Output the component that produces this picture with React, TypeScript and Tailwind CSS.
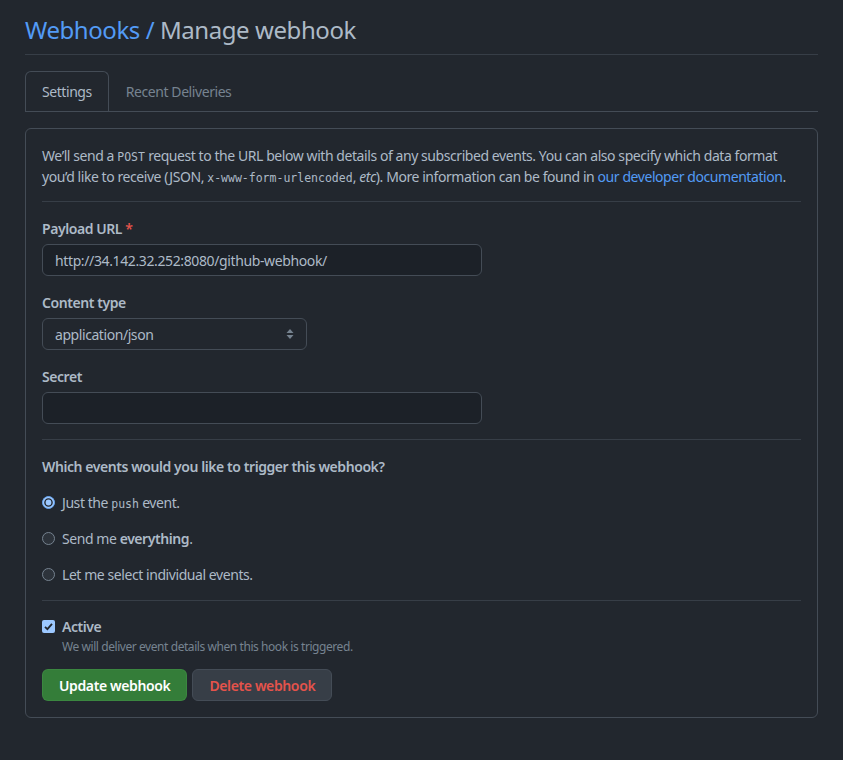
import React, { useState } from "react";

const Radio = ({ checked }: { checked: boolean }) =>
  checked ? (
    <svg width="13" height="13" viewBox="0 0 13 13" className="shrink-0">
      <circle cx="6.5" cy="6.5" r="6" fill="#9cc8ff" stroke="#6aa7f2" />
      <circle cx="6.5" cy="6.5" r="3.6" fill="#9cc8ff" stroke="#22272e" strokeWidth="1.4" />
    </svg>
  ) : (
    <svg width="13" height="13" viewBox="0 0 13 13" className="shrink-0">
      <circle cx="6.5" cy="6.5" r="6" fill="#2d333b" stroke="#768390" />
    </svg>
  );

const mono = { fontFamily: '"DejaVu Sans Mono", monospace', letterSpacing: "0", lineHeight: "0" };

const App = () => {
  const [event, setEvent] = useState<number>(0);
  const [url, setUrl] = useState<string>("http://34.142.32.252:8080/github-webhook/");

  return (
    <div
      className="min-h-screen w-full bg-[#22272e] text-[#adbac7] px-[25px] pt-[14px] pb-10 tracking-[-0.027em]"
      style={{ fontFamily: '"Segoe UI", "Noto Sans", "Liberation Sans", sans-serif' }}
    >
      <h1 className="text-[24px] leading-[32px] font-normal pb-[8px] border-b border-[#373e47]">
        <span className="text-[#539bf5]">Webhooks / </span>
        <span>Manage webhook</span>
      </h1>

      <div className="mt-[16px] flex border-b border-[#444c56] text-[14px]">
        <div className="px-[16px] h-[40px] flex items-center border border-[#444c56] border-b-0 rounded-t-md -mb-px bg-[#22272e] text-[#adbac7]">
          Settings
        </div>
        <div className="px-[17px] h-[40px] flex items-center text-[#768390]">Recent Deliveries</div>
      </div>

      <div className="mt-[16px] border border-[#444c56] rounded-md px-[16px] pt-[16px] pb-[16px] text-[14px]">
        <p className="leading-[21px]">
          We’ll send a{" "}
          <code className="text-[11.5px]" style={mono}>
            POST
          </code>{" "}
          request to the URL below with details of any subscribed events. You can also specify which data format
          you’d like to receive (JSON,{" "}
          <code className="text-[11.5px]" style={mono}>
            x-www-form-urlencoded
          </code>
          , <em>etc</em>). More information can be found in{" "}
          <a className="text-[#539bf5]" href="#">
            our developer documentation
          </a>
          .
        </p>

        <div className="border-t border-[#373e47] mt-[14px] mb-[16px]" />

        <label className="block font-semibold leading-[21px]">
          Payload URL <span className="text-[#e5534b]">*</span>
        </label>
        <input
          className="mt-[5px] w-[440px] h-[32px] px-[12px] bg-[#1c2128] border border-[#444c56] rounded-md outline-none text-[14px] text-[#adbac7] tracking-[-0.027em]"
          value={url}
          onChange={(e) => setUrl(e.target.value)}
        />

        <label className="block font-semibold leading-[21px] mt-[16px]">Content type</label>
        <div className="mt-[5px] w-[265px] h-[32px] px-[12px] bg-[#22272e] border border-[#444c56] rounded-md flex items-center justify-between">
          <span>application/json</span>
          <svg width="8" height="12" viewBox="0 0 8 12">
            <path d="M4 1 L7.5 5 H0.5 Z" fill="#768390" />
            <path d="M4 11 L7.5 7 H0.5 Z" fill="#768390" />
          </svg>
        </div>

        <label className="block font-semibold leading-[21px] mt-[16px]">Secret</label>
        <input className="mt-[5px] w-[440px] h-[32px] px-[12px] bg-[#1c2128] border border-[#444c56] rounded-md outline-none" />

        <div className="border-t border-[#373e47] mt-[15px] mb-[16px]" />

        <div className="font-semibold leading-[21px]">Which events would you like to trigger this webhook?</div>

        <div className="mt-[15px] flex flex-col gap-[15px]">
          {[
            <>
              Just the{" "}
              <code className="text-[11.5px]" style={mono}>
                push
              </code>{" "}
              event.
            </>,
            <>
              Send me <strong className="font-semibold">everything</strong>.
            </>,
            <>Let me select individual events.</>,
          ].map((label, i) => (
            <div key={i} className="flex items-center gap-[7px] h-[21px] cursor-pointer" onClick={() => setEvent(i)}>
              <Radio checked={event === i} />
              <span>{label}</span>
            </div>
          ))}
        </div>

        <div className="border-t border-[#373e47] mt-[15px] mb-[15px]" />

        <div className="flex items-center gap-[7px] h-[21px]">
          <svg width="13" height="13" viewBox="0 0 13 13" className="shrink-0">
            <rect x="0" y="0" width="13" height="13" rx="2" fill="#9cc8ff" />
            <path d="M3 6.8 L5.4 9.2 L10 3.8" stroke="#22272e" strokeWidth="1.8" fill="none" />
          </svg>
          <span className="font-semibold">Active</span>
        </div>
        <div className="ml-[20px] mt-[1px] text-[12px] leading-[18px] text-[#768390]">
          We will deliver event details when this hook is triggered.
        </div>

        <div className="mt-[13px] flex gap-[5px]">
          <button className="h-[32px] px-[16px] rounded-md bg-[#347d39] border border-[#46954a]/40 text-white font-semibold tracking-[-0.027em]">
            Update webhook
          </button>
          <button className="h-[32px] px-[16px] rounded-md bg-[#373e47] border border-[#444c56] text-[#e5534b] font-semibold tracking-[-0.027em]">
            Delete webhook
          </button>
        </div>
      </div>
    </div>
  );
};

export default App;
